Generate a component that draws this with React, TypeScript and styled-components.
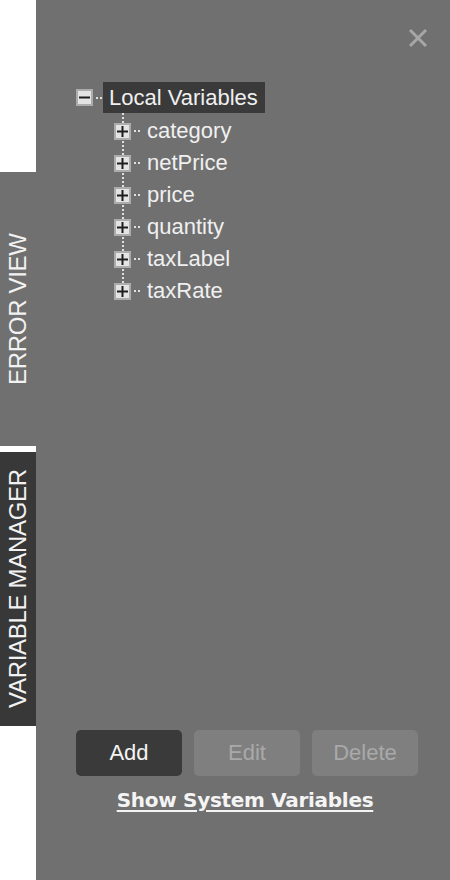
import React from 'react';
import styled, { createGlobalStyle } from 'styled-components';

const GlobalStyle = createGlobalStyle`
  html, body, #root {
    margin: 0;
    padding: 0;
    height: 100%;
  }
  body {
    font-family: 'Liberation Sans', Arial, sans-serif;
    background: #ffffff;
  }
`;

const Page = styled.div`
  display: flex;
  height: 880px;
  width: 450px;
  overflow: hidden;
`;

const SideTabs = styled.div`
  width: 36px;
  flex-shrink: 0;
  display: flex;
  flex-direction: column;
  gap: 6px;
  padding-top: 172px;
  background: #ffffff;
`;

const SideTab = styled.div<{ $active?: boolean }>`
  height: 274px;
  display: flex;
  align-items: center;
  justify-content: center;
  background: ${(p) => (p.$active ? '#383838' : '#707070')};
  color: #f2f2f2;
  font-size: 24px;
  letter-spacing: -0.3px;
  white-space: nowrap;
  writing-mode: vertical-rl;
  transform: rotate(180deg);
  cursor: pointer;
`;

const Panel = styled.div`
  flex: 1;
  background: #707070;
  display: flex;
  flex-direction: column;
  padding: 28px 32px 0 40px;
`;

const Header = styled.div`
  display: flex;
  justify-content: flex-end;
`;

const CloseButton = styled.button`
  width: 20px;
  height: 20px;
  padding: 0;
  margin-right: -10px;
  border: none;
  background: none;
  cursor: pointer;
  display: flex;
`;

const Tree = styled.div`
  margin-top: 34px;
  display: flex;
  flex-direction: column;
  color: #f0f0f0;
  font-size: 22px;
`;

const NodeRow = styled.div<{ $height: number }>`
  display: flex;
  align-items: center;
  height: ${(p) => p.$height}px;
`;

const ToggleBox = styled.span`
  width: 17px;
  height: 17px;
  box-sizing: border-box;
  border: 2px solid #acacac;
  background: #e4e4e4;
  display: flex;
  align-items: center;
  justify-content: center;
  flex-shrink: 0;
`;

const Connector = styled.span<{ $gap: number }>`
  width: 7px;
  height: 2px;
  margin: 0 ${(p) => p.$gap}px 0 3px;
  background-image: repeating-linear-gradient(to right, #e0e0e0 0 2px, transparent 2px 4px);
  flex-shrink: 0;
`;

const RootLabel = styled.span`
  background: #3a3a3a;
  height: 31px;
  line-height: 31px;
  padding: 0 7px 0 6px;
  white-space: nowrap;
`;

const ChildList = styled.div`
  display: flex;
  flex-direction: column;
  margin-left: 38px;
  padding-top: 2px;
  background-image: repeating-linear-gradient(to bottom, #e0e0e0 0 2px, transparent 2px 4px);
  background-size: 2px calc(100% - 16px);
  background-position: 8px 0;
  background-repeat: no-repeat;
`;

const ChildLabel = styled.span`
  white-space: nowrap;
`;

const Spacer = styled.div`
  flex: 1;
`;

const Footer = styled.div`
  display: flex;
  flex-direction: column;
  align-items: center;
  gap: 12px;
  padding-bottom: 68px;
`;

const ButtonRow = styled.div`
  display: flex;
  gap: 12px;
`;

const ActionButton = styled.button<{ $primary?: boolean }>`
  width: 106px;
  height: 46px;
  border: none;
  border-radius: 5px;
  font-family: 'Liberation Sans', Arial, sans-serif;
  font-size: 22px;
  background: ${(p) => (p.$primary ? '#3a3a3a' : '#7f7f7f')};
  color: ${(p) => (p.$primary ? '#f4f4f4' : '#a9a9a9')};
  cursor: ${(p) => (p.$primary ? 'pointer' : 'default')};
`;

const SystemLink = styled.a`
  font-family: 'DejaVu Sans', Verdana, sans-serif;
  font-weight: bold;
  font-size: 20px;
  letter-spacing: -0.3px;
  color: #f4f4f4;
  text-decoration: underline;
  text-underline-offset: 3px;
  text-decoration-thickness: 2px;
  cursor: pointer;
  line-height: 24px;
  margin-right: 4px;
`;

const variables = ['category', 'netPrice', 'price', 'quantity', 'taxLabel', 'taxRate'];

const Minus = () => (
  <svg width="11" height="11" viewBox="0 0 11 11">
    <rect x="0" y="4.5" width="11" height="2" fill="#1e1e1e" />
  </svg>
);

const Plus = () => (
  <svg width="11" height="11" viewBox="0 0 11 11">
    <rect x="0" y="4.5" width="11" height="2" fill="#1e1e1e" />
    <rect x="4.5" y="0" width="2" height="11" fill="#1e1e1e" />
  </svg>
);

const App: React.FC = () => {
  return (
    <>
      <GlobalStyle />
      <Page>
        <SideTabs>
          <SideTab>ERROR VIEW</SideTab>
          <SideTab $active>VARIABLE MANAGER</SideTab>
        </SideTabs>
        <Panel>
          <Header>
            <CloseButton aria-label="Close">
              <svg width="20" height="20" viewBox="0 0 20 20">
                <path d="M2 2 L18 18 M18 2 L2 18" stroke="#a7a7a7" strokeWidth="3" />
              </svg>
            </CloseButton>
          </Header>
          <Tree>
            <NodeRow $height={31}>
              <ToggleBox>
                <Minus />
              </ToggleBox>
              <Connector $gap={0} />
              <RootLabel>Local Variables</RootLabel>
            </NodeRow>
            <ChildList>
              {variables.map((name) => (
                <NodeRow key={name} $height={32}>
                  <ToggleBox>
                    <Plus />
                  </ToggleBox>
                  <Connector $gap={6} />
                  <ChildLabel>{name}</ChildLabel>
                </NodeRow>
              ))}
            </ChildList>
          </Tree>
          <Spacer />
          <Footer>
            <ButtonRow>
              <ActionButton $primary>Add</ActionButton>
              <ActionButton disabled>Edit</ActionButton>
              <ActionButton disabled>Delete</ActionButton>
            </ButtonRow>
            <SystemLink>Show System Variables</SystemLink>
          </Footer>
        </Panel>
      </Page>
    </>
  );
};

export default App;
